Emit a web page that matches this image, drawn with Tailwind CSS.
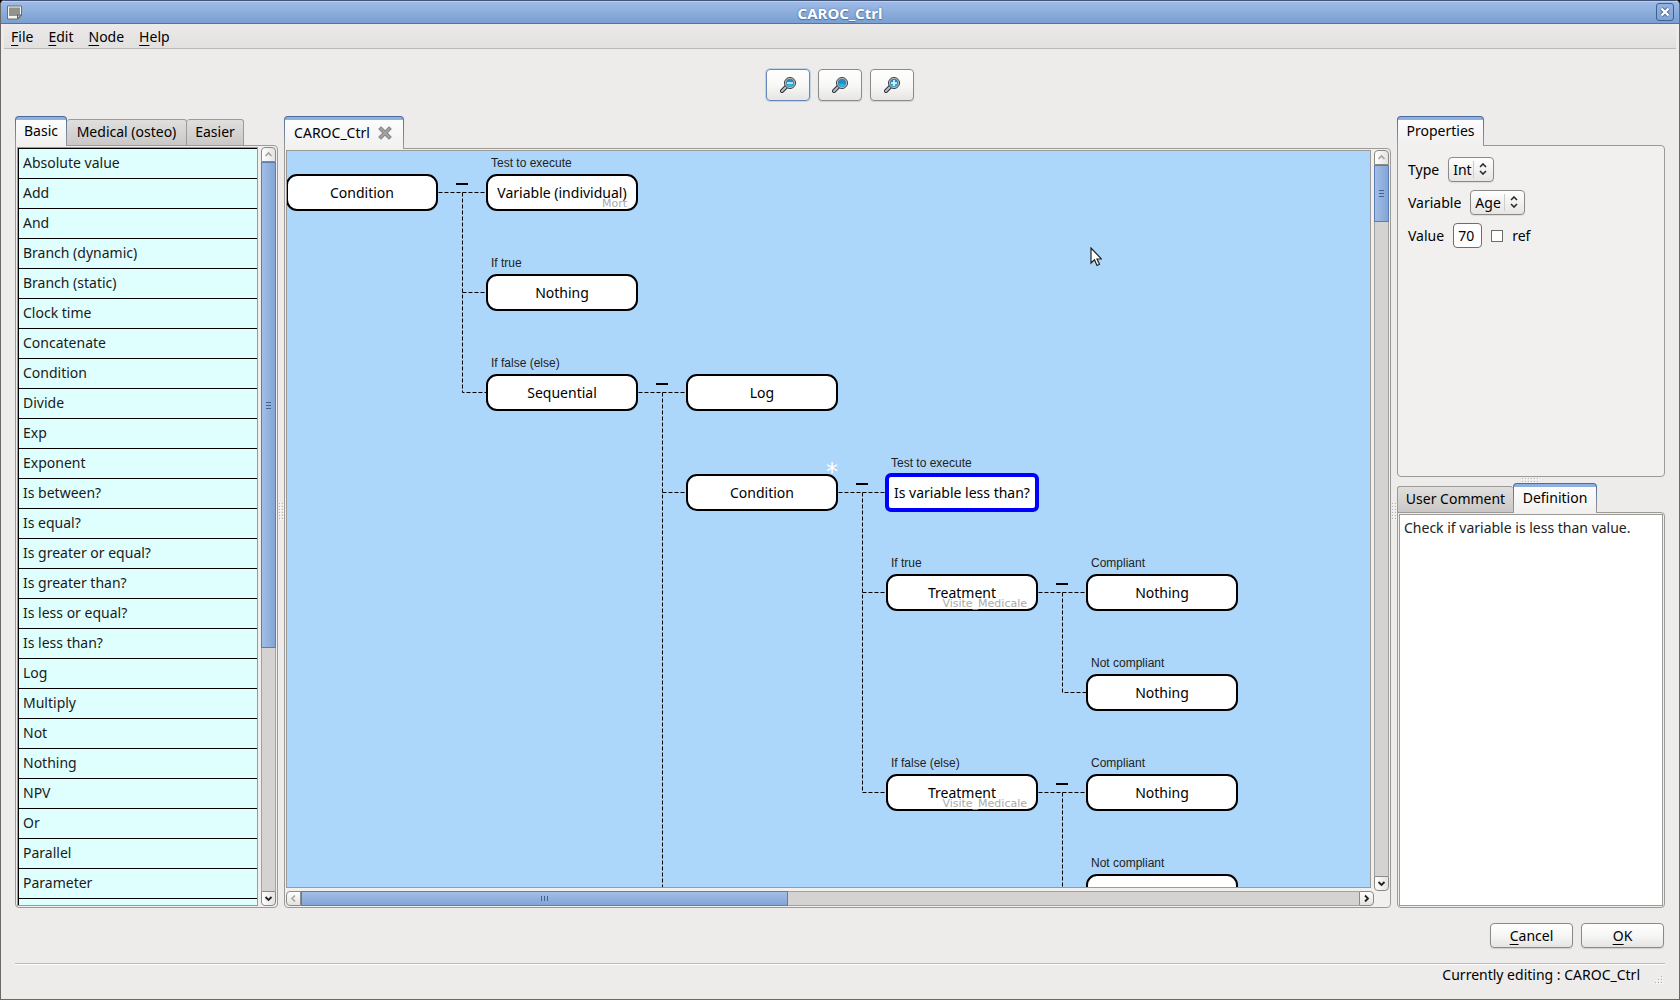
<!DOCTYPE html>
<html lang="en">
<head>
<meta charset="utf-8">
<title>CAROC_Ctrl</title>
<script src="https://cdn.jsdelivr.net/npm/@tailwindcss/browser@4"></script>
</head>
<body class="bg-[#0c0c0c] font-['Noto_Sans',sans-serif] text-[14px] leading-5 text-black">
<svg class="absolute h-0 w-0" aria-hidden="true">
  <defs>
    <linearGradient id="lens" x1="0" y1="0" x2="0" y2="1"><stop offset="0" stop-color="#3f86b8"/><stop offset=".45" stop-color="#1090cf"/><stop offset="1" stop-color="#2fe0f5"/></linearGradient>
    <symbol id="magnifier" viewBox="0 0 16 16">
      <path d="M2 14 L7 9" stroke="#2d3038" stroke-width="4" stroke-linecap="round"/>
      <path d="M2 14 L6.500 9.500" stroke="#b9bfcc" stroke-width="2" stroke-linecap="round"/>
      <circle cx="10" cy="6" r="5.500" fill="#d4d6da" stroke="#33363e" stroke-width="1"/>
      <circle cx="10" cy="6" r="3.900" fill="url(#lens)" stroke="#4d6a84" stroke-width=".6"/>
    </symbol>
    <symbol id="up" viewBox="0 0 13 13"><path d="M3.500 8 L6.500 5 L9.500 8" fill="none" stroke="currentColor" stroke-width="1.600"/></symbol>
    <symbol id="down" viewBox="0 0 13 13"><path d="M3.500 5 L6.500 8 L9.500 5" fill="none" stroke="currentColor" stroke-width="1.800"/></symbol>
    <symbol id="left" viewBox="0 0 13 13"><path d="M8 3.500 L5 6.500 L8 9.500" fill="none" stroke="currentColor" stroke-width="1.600"/></symbol>
    <symbol id="right" viewBox="0 0 13 13"><path d="M5 3.500 L8 6.500 L5 9.500" fill="none" stroke="currentColor" stroke-width="1.800"/></symbol>
    <symbol id="updown" viewBox="0 0 8 12"><path d="M1 4 L4 1 L7 4 M1 8 L4 11 L7 8" fill="none" stroke="#2a2a2a" stroke-width="1.600"/></symbol>
    <pattern id="dots" width="3" height="3" patternUnits="userSpaceOnUse"><rect width="1" height="1" fill="#b4b2af"/><rect x="1" y="1" width="1" height="1" fill="#fff"/></pattern>
  </defs>
</svg>
<div class="flex h-screen flex-col overflow-hidden rounded-t-[5px] border-x border-b border-[#6b6966] bg-[#edeceb]">

  <header class="relative flex h-6 shrink-0 items-center justify-center border-t border-b border-t-[#41547a] border-b-[#4f74a8] bg-linear-to-b from-[#a0bce8] to-[#7a9fd0] shadow-[inset_0_1px_0_#b9cff0]">
    <svg class="absolute left-1.5 top-1 h-4 w-4" viewBox="0 0 16 16"><path d="M.5 1 H14.500 V11 L11 14 H.5 Z" fill="#f4f4f0" stroke="#6d6f6d"/><rect x="2" y="2.500" width="11" height="8.500" fill="#8f958e"/><path d="M10.500 13.500 V10 H14.500 Z" fill="#c9cbc6" stroke="#5c5e5b"/></svg>
    <h1 class="pt-0.5 text-[15px] font-bold text-white [text-shadow:0_1px_1px_#4a6fa5,0_0_2px_#4a6fa5]">CAROC_Ctrl</h1>
    <button aria-label="Close" class="absolute right-[5px] top-0.5 flex h-[18px] w-[18px] items-center justify-center rounded-[3px] border border-[#3f6090] bg-linear-to-b from-[#93b3e0] to-[#7fa3d4]"><svg class="h-2.5 w-2.5" viewBox="0 0 10 10"><path d="M1.500 1.500 L8.500 8.500 M8.500 1.500 L1.500 8.500" stroke="#45679a" stroke-width="4"/><path d="M1.500 1.500 L8.500 8.500 M8.500 1.500 L1.500 8.500" stroke="#fff" stroke-width="2.400"/></svg></button>
  </header>

  <nav class="mx-[3px] flex h-[25px] shrink-0 items-center gap-[15px] border-b border-[#bcbab7] bg-linear-to-b from-[#ebeae9] to-[#e2e1df] px-[7px] pt-0.5">
    <button class="h-5"><u class="underline-offset-3">F</u>ile</button>
    <button class="h-5"><u class="underline-offset-3">E</u>dit</button>
    <button class="h-5"><u class="underline-offset-3">N</u>ode</button>
    <button class="h-5"><u class="underline-offset-3">H</u>elp</button>
  </nav>

  <div class="flex h-[67px] shrink-0 items-start justify-center gap-2 pt-5">
    <button aria-label="Zoom out" class="flex h-8 w-11 items-center justify-center rounded-[4px] border border-[#6788b8] bg-linear-to-b from-white via-[#f8f8f7] to-[#e6e5e4] shadow-[0_0_0_1px_#c3d1e6]"><svg class="h-4 w-4" viewBox="0 0 16 16"><use href="#magnifier"/><path d="M7 6 H13" stroke="#d8f6ff" stroke-width="1.600"/></svg></button>
    <button aria-label="Zoom reset" class="flex h-8 w-11 items-center justify-center rounded-[4px] border border-[#8c8a87] bg-linear-to-b from-white via-[#f8f8f7] to-[#e6e5e4] shadow-[0_1px_1px_#d0cecb]"><svg class="h-4 w-4" viewBox="0 0 16 16"><use href="#magnifier"/></svg></button>
    <button aria-label="Zoom in" class="flex h-8 w-11 items-center justify-center rounded-[4px] border border-[#8c8a87] bg-linear-to-b from-white via-[#f8f8f7] to-[#e6e5e4] shadow-[0_1px_1px_#d0cecb]"><svg class="h-4 w-4" viewBox="0 0 16 16"><use href="#magnifier"/><path d="M7 6 H13 M10 3 V9" stroke="#e8fbff" stroke-width="1.600"/></svg></button>
  </div>

  <main class="flex min-h-0 flex-1 px-3.5">

    <section class="flex w-[263px] shrink-0 flex-col">
      <div class="flex h-[30px] items-end">
        <button class="relative z-10 flex h-[30px] w-[52px] shrink-0 rounded-t-[4px] bg-linear-to-b from-[#4a6c9c] to-[#9c9a97] px-px pt-px"><span class="flex h-full w-full items-center justify-center rounded-t-[3px] border-t-3 border-[#8fb0e0] bg-linear-to-b from-[#fdfdfd] to-[#f1f0ef] pb-1">Basic</span></button>
        <button class="flex h-[27px] w-[120px] shrink-0 items-center justify-center rounded-t-[3px] border border-l-0 border-[#9c9a97] bg-linear-to-b from-[#e0dfdd] to-[#cac8c6] pb-0.5 whitespace-nowrap">Medical (osteo)</button>
        <button class="flex h-[27px] w-[57px] shrink-0 items-center justify-center rounded-t-[3px] border border-l-0 border-[#9c9a97] bg-linear-to-b from-[#e0dfdd] to-[#cac8c6] pb-0.5">Easier</button>
      </div>
      <div class="-mt-px flex min-h-0 flex-1 justify-between rounded-[4px] rounded-tl-none border border-[#9c9a97] bg-[#f1f0ef] p-px">
        <ul class="w-[241px] overflow-hidden border border-[#9c9a97] bg-[#dfffff] text-[#1a1a1a]">
          <li class="h-[30px] border-t border-l border-black pl-1 leading-[27px]">Absolute value</li>
          <li class="h-[30px] border-t border-l border-black pl-1 leading-[27px]">Add</li>
          <li class="h-[30px] border-t border-l border-black pl-1 leading-[27px]">And</li>
          <li class="h-[30px] border-t border-l border-black pl-1 leading-[27px]">Branch (dynamic)</li>
          <li class="h-[30px] border-t border-l border-black pl-1 leading-[27px]">Branch (static)</li>
          <li class="h-[30px] border-t border-l border-black pl-1 leading-[27px]">Clock time</li>
          <li class="h-[30px] border-t border-l border-black pl-1 leading-[27px]">Concatenate</li>
          <li class="h-[30px] border-t border-l border-black pl-1 leading-[27px]">Condition</li>
          <li class="h-[30px] border-t border-l border-black pl-1 leading-[27px]">Divide</li>
          <li class="h-[30px] border-t border-l border-black pl-1 leading-[27px]">Exp</li>
          <li class="h-[30px] border-t border-l border-black pl-1 leading-[27px]">Exponent</li>
          <li class="h-[30px] border-t border-l border-black pl-1 leading-[27px]">Is between?</li>
          <li class="h-[30px] border-t border-l border-black pl-1 leading-[27px]">Is equal?</li>
          <li class="h-[30px] border-t border-l border-black pl-1 leading-[27px]">Is greater or equal?</li>
          <li class="h-[30px] border-t border-l border-black pl-1 leading-[27px]">Is greater than?</li>
          <li class="h-[30px] border-t border-l border-black pl-1 leading-[27px]">Is less or equal?</li>
          <li class="h-[30px] border-t border-l border-black pl-1 leading-[27px]">Is less than?</li>
          <li class="h-[30px] border-t border-l border-black pl-1 leading-[27px]">Log</li>
          <li class="h-[30px] border-t border-l border-black pl-1 leading-[27px]">Multiply</li>
          <li class="h-[30px] border-t border-l border-black pl-1 leading-[27px]">Not</li>
          <li class="h-[30px] border-t border-l border-black pl-1 leading-[27px]">Nothing</li>
          <li class="h-[30px] border-t border-l border-black pl-1 leading-[27px]">NPV</li>
          <li class="h-[30px] border-t border-l border-black pl-1 leading-[27px]">Or</li>
          <li class="h-[30px] border-t border-l border-black pl-1 leading-[27px]">Parallel</li>
          <li class="h-[30px] border-t border-l border-black pl-1 leading-[27px]">Parameter</li>
          <li class="h-[30px] border-t border-l border-black"></li>
        </ul>
        <div class="flex w-[15px] flex-col">
          <button aria-label="Scroll up" class="h-[15px] rounded-t-[4px] border border-[#8c8a87] bg-linear-to-r from-white to-[#e3e2e0] text-[#a5a3a0]"><svg class="h-[13px] w-[13px]"><use href="#up"/></svg></button>
          <div class="min-h-0 flex-1 border-x border-[#a3a19e] bg-[#d4d3d1]"><div class="-mx-px flex h-2/3 items-center justify-center border border-[#5b7eb2] bg-linear-to-r from-[#a3bee7] to-[#82a5d6]"><svg class="h-[7px] w-[5px]" viewBox="0 0 5 7"><path d="M0 0h5v1H0z M0 3h5v1H0z M0 6h5v1H0z" fill="#42638f"/></svg></div></div>
          <button aria-label="Scroll down" class="h-[15px] rounded-b-[4px] border border-[#8c8a87] bg-linear-to-r from-white to-[#e3e2e0] text-[#222]"><svg class="h-[13px] w-[13px]"><use href="#down"/></svg></button>
        </div>
      </div>
    </section>

    <div class="flex w-1.5 shrink-0 items-center justify-center"><svg class="h-[18px] w-[5px]"><rect width="5" height="18" fill="url(#dots)"/></svg></div>

    <section class="flex min-w-0 flex-1 flex-col">
      <div class="flex h-[33px] items-end">
        <button class="relative z-10 flex h-[33px] w-[120px] shrink-0 rounded-t-[4px] bg-linear-to-b from-[#4a6c9c] to-[#9c9a97] px-px pt-px"><span class="flex h-full w-full items-center justify-center gap-2 rounded-t-[3px] border-t-3 border-[#8fb0e0] bg-linear-to-b from-[#fdfdfd] to-[#f1f0ef] pr-0.5 pb-[3px]">CAROC_Ctrl<svg class="h-3.5 w-3.5" viewBox="0 0 14 14"><path d="M3 3 L11 11 M11 3 L3 11" stroke="#868583" stroke-width="4" stroke-linecap="square"/><path d="M3 3 L11 11 M11 3 L3 11" stroke="#a3a2a0" stroke-width="2" stroke-linecap="square"/></svg></span></button>
      </div>
      <div class="-mt-px flex min-h-0 flex-1 gap-[3px] rounded-[4px] rounded-tl-none border border-[#9c9a97] bg-[#f1f0ef] p-px">
        <div class="flex min-w-0 flex-1 flex-col gap-[3px]">
          <div class="relative min-h-0 flex-1 overflow-hidden border border-[#9c9a97] bg-[#acd7fa]">
            <svg class="absolute left-0 top-0 h-full w-full" fill="none" stroke="#000" stroke-dasharray="4 2">
              <g transform="translate(0.5 0.5)">
                <path d="M151 41H199"/><path d="M175 41V241H199"/><path d="M175 141H199"/>
                <path d="M351 241H399"/><path d="M375 241V2000"/><path d="M375 341H399"/>
                <path d="M551 341H599"/><path d="M575 341V641H599"/><path d="M575 441H599"/>
                <path d="M751 441H799"/><path d="M775 441V541H799"/>
                <path d="M751 641H799"/><path d="M775 641V741H799"/>
              </g>
            </svg>
            <i class="absolute left-[169px] top-8 h-0.5 w-3 bg-black"></i>
            <i class="absolute left-[369px] top-[232px] h-0.5 w-3 bg-black"></i>
            <i class="absolute left-[569px] top-[332px] h-0.5 w-3 bg-black"></i>
            <i class="absolute left-[769px] top-[432px] h-0.5 w-3 bg-black"></i>
            <i class="absolute left-[769px] top-[632px] h-0.5 w-3 bg-black"></i>

            <div class="font-['Liberation_Sans',sans-serif] text-[12px] leading-4 text-[#222]">
              <span class="absolute left-[204px] top-1">Test to execute</span>
              <span class="absolute left-[204px] top-[104px]">If true</span>
              <span class="absolute left-[204px] top-[204px]">If false (else)</span>
              <span class="absolute left-[604px] top-[304px]">Test to execute</span>
              <span class="absolute left-[604px] top-[404px]">If true</span>
              <span class="absolute left-[604px] top-[604px]">If false (else)</span>
              <span class="absolute left-[804px] top-[404px]">Compliant</span>
              <span class="absolute left-[804px] top-[504px]">Not compliant</span>
              <span class="absolute left-[804px] top-[604px]">Compliant</span>
              <span class="absolute left-[804px] top-[704px]">Not compliant</span>
            </div>

            <div class="absolute -left-px top-[23px] flex h-[37px] w-[152px] items-center justify-center rounded-[11px] border-2 border-black bg-white">Condition</div>
            <div class="absolute left-[199px] top-[23px] flex h-[37px] w-[152px] items-center justify-center rounded-[11px] border-2 border-black bg-white whitespace-nowrap">Variable (individual)<span class="absolute -bottom-px right-[9px] font-['DejaVu_Sans',sans-serif] text-[11px] leading-3 text-[#aaa]">Mort</span></div>
            <div class="absolute left-[199px] top-[123px] flex h-[37px] w-[152px] items-center justify-center rounded-[11px] border-2 border-black bg-white">Nothing</div>
            <div class="absolute left-[199px] top-[223px] flex h-[37px] w-[152px] items-center justify-center rounded-[11px] border-2 border-black bg-white">Sequential</div>
            <div class="absolute left-[399px] top-[223px] flex h-[37px] w-[152px] items-center justify-center rounded-[11px] border-2 border-black bg-white">Log</div>
            <span class="absolute left-[539px] top-[309px] font-['DejaVu_Sans',sans-serif] text-[24px] leading-6 text-white">*</span>
            <div class="absolute left-[399px] top-[323px] flex h-[37px] w-[152px] items-center justify-center rounded-[11px] border-2 border-black bg-white">Condition</div>
            <div class="absolute left-[598px] top-[322px] flex h-[39px] w-[154px] items-center justify-center rounded-[6px] border-4 border-[#0000ff] bg-white whitespace-nowrap">Is variable less than?</div>
            <div class="absolute left-[599px] top-[423px] flex h-[37px] w-[152px] items-center justify-center rounded-[11px] border-2 border-black bg-white">Treatment<span class="absolute -bottom-px right-[9px] font-['DejaVu_Sans',sans-serif] text-[11px] leading-3 text-[#aaa]">Visite_Medicale</span></div>
            <div class="absolute left-[599px] top-[623px] flex h-[37px] w-[152px] items-center justify-center rounded-[11px] border-2 border-black bg-white">Treatment<span class="absolute -bottom-px right-[9px] font-['DejaVu_Sans',sans-serif] text-[11px] leading-3 text-[#aaa]">Visite_Medicale</span></div>
            <div class="absolute left-[799px] top-[423px] flex h-[37px] w-[152px] items-center justify-center rounded-[11px] border-2 border-black bg-white">Nothing</div>
            <div class="absolute left-[799px] top-[523px] flex h-[37px] w-[152px] items-center justify-center rounded-[11px] border-2 border-black bg-white">Nothing</div>
            <div class="absolute left-[799px] top-[623px] flex h-[37px] w-[152px] items-center justify-center rounded-[11px] border-2 border-black bg-white">Nothing</div>
            <div class="absolute left-[799px] top-[723px] flex h-[37px] w-[152px] items-center justify-center rounded-[11px] border-2 border-black bg-white">Nothing</div>

            <svg class="absolute left-[803px] top-24 h-5 w-3" viewBox="0 0 12 20"><path d="M1 1 V16 L4.500 12.700 L7 18.500 L9.500 17.300 L7 12 H11.500 Z" fill="#fff" stroke="#222" stroke-width="1.200"/></svg>
          </div>
          <div class="-mr-[3px] flex h-[15px] shrink-0">
            <button aria-label="Scroll left" class="w-[15px] shrink-0 rounded-l-[4px] border border-[#8c8a87] bg-linear-to-b from-white to-[#e3e2e0] text-[#a5a3a0]"><svg class="h-[13px] w-[13px]"><use href="#left"/></svg></button>
            <div class="min-w-0 flex-1 border-y border-[#a3a19e] bg-[#d4d3d1]"><div class="-my-px flex h-[15px] w-[46%] items-center justify-center border border-[#5b7eb2] bg-linear-to-b from-[#a3bee7] to-[#82a5d6]"><svg class="h-[5px] w-[7px]" viewBox="0 0 7 5"><path d="M0 0v5h1V0z M3 0v5h1V0z M6 0v5h1V0z" fill="#42638f"/></svg></div></div>
            <button aria-label="Scroll right" class="w-[15px] shrink-0 rounded-r-[4px] border border-[#8c8a87] bg-linear-to-b from-white to-[#e3e2e0] text-[#222]"><svg class="h-[13px] w-[13px]"><use href="#right"/></svg></button>
          </div>
        </div>
        <div class="mb-[15px] flex w-[15px] shrink-0 flex-col">
          <button aria-label="Scroll up" class="h-[15px] rounded-t-[4px] border border-[#8c8a87] bg-linear-to-r from-white to-[#e3e2e0] text-[#a5a3a0]"><svg class="h-[13px] w-[13px]"><use href="#up"/></svg></button>
          <div class="min-h-0 flex-1 border-x border-[#a3a19e] bg-[#d4d3d1]"><div class="-mx-px flex h-[8%] items-center justify-center border border-[#5b7eb2] bg-linear-to-r from-[#a3bee7] to-[#82a5d6]"><svg class="h-[7px] w-[5px]" viewBox="0 0 5 7"><path d="M0 0h5v1H0z M0 3h5v1H0z M0 6h5v1H0z" fill="#42638f"/></svg></div></div>
          <button aria-label="Scroll down" class="h-[15px] rounded-b-[4px] border border-[#8c8a87] bg-linear-to-r from-white to-[#e3e2e0] text-[#222]"><svg class="h-[13px] w-[13px]"><use href="#down"/></svg></button>
        </div>
      </div>
    </section>

    <div class="flex w-1.5 shrink-0 items-center justify-center"><svg class="h-[18px] w-[5px]"><rect width="5" height="18" fill="url(#dots)"/></svg></div>

    <aside class="flex w-[268px] shrink-0 flex-col">
      <div class="flex h-[30px] items-end">
        <button class="relative z-10 flex h-[30px] w-[87px] shrink-0 rounded-t-[4px] bg-linear-to-b from-[#4a6c9c] to-[#9c9a97] px-px pt-px"><span class="flex h-full w-full items-center justify-center rounded-t-[3px] border-t-3 border-[#8fb0e0] bg-linear-to-b from-[#fdfdfd] to-[#f1f0ef] pb-1">Properties</span></button>
      </div>
      <form class="-mt-px flex h-[332px] shrink-0 flex-col items-start gap-2 rounded-[4px] rounded-tl-none border border-[#9c9a97] bg-[#f1f0ef] px-2.5 pt-[11px]">
        <div class="flex items-center gap-[9px]">
          <label for="type">Type</label>
          <div class="relative"><select id="type" class="block h-[25px] w-[46px] appearance-none rounded-[4px] border border-[#8c8a87] bg-linear-to-b from-white to-[#e6e5e4] pl-1 shadow-[0_1px_1px_#dddbd8]"><option>Int</option></select><svg class="pointer-events-none absolute right-[7px] top-1.5 h-3 w-2"><use href="#updown"/></svg><i class="absolute right-5 top-1 h-[17px] w-px bg-[#cfcdca]"></i></div>
        </div>
        <div class="flex items-center gap-[9px]">
          <label for="variable">Variable</label>
          <div class="relative"><select id="variable" class="block h-[25px] w-[55px] appearance-none rounded-[4px] border border-[#8c8a87] bg-linear-to-b from-white to-[#e6e5e4] pl-1 shadow-[0_1px_1px_#dddbd8]"><option>Age</option></select><svg class="pointer-events-none absolute right-[7px] top-1.5 h-3 w-2"><use href="#updown"/></svg><i class="absolute right-5 top-1 h-[17px] w-px bg-[#cfcdca]"></i></div>
        </div>
        <div class="flex items-center gap-[9px]">
          <label for="value">Value</label>
          <input id="value" value="70" class="h-[25px] w-[29px] rounded-[4px] border border-[#6f6d6a] bg-white pl-1">
          <input id="ref" type="checkbox" class="h-3 w-3 appearance-none border border-[#6f6d6a] bg-white">
          <label for="ref">ref</label>
        </div>
      </form>
      <div class="flex h-1.5 shrink-0 items-center justify-center"><svg class="h-[5px] w-[18px]"><rect width="18" height="5" fill="url(#dots)"/></svg></div>
      <div class="flex h-[30px] shrink-0 items-end">
        <button class="flex h-[27px] w-[116px] shrink-0 items-center justify-center rounded-t-[3px] border border-r-0 border-[#9c9a97] bg-linear-to-b from-[#e0dfdd] to-[#cac8c6] pb-0.5 whitespace-nowrap">User Comment</button>
        <button class="relative z-10 flex h-[30px] w-[84px] shrink-0 rounded-t-[4px] bg-linear-to-b from-[#4a6c9c] to-[#9c9a97] px-px pt-px"><span class="flex h-full w-full items-center justify-center rounded-t-[3px] border-t-3 border-[#8fb0e0] bg-linear-to-b from-[#fdfdfd] to-[#f1f0ef] pb-1">Definition</span></button>
      </div>
      <div class="-mt-px flex min-h-0 flex-1 rounded-[4px] rounded-tl-none border border-[#9c9a97] bg-[#f1f0ef] p-px">
        <textarea aria-label="Definition" class="flex-1 resize-none border border-[#9c9a97] bg-white px-1 py-[3px] text-[#222]">Check if variable is less than value.</textarea>
      </div>
    </aside>
  </main>

  <footer class="flex shrink-0 flex-col px-3.5 pt-[15px]">
    <div class="mr-px flex justify-end gap-2">
      <button class="h-[25px] w-[83px] rounded-[4px] border border-[#8c8a87] bg-linear-to-b from-white via-[#f6f6f5] to-[#e6e5e4] shadow-[0_1px_1px_#d0cecb]"><u class="underline-offset-3">C</u>ancel</button>
      <button class="h-[25px] w-[83px] rounded-[4px] border border-[#8c8a87] bg-linear-to-b from-white via-[#f6f6f5] to-[#e6e5e4] shadow-[0_1px_1px_#d0cecb]"><u class="underline-offset-3">O</u>K</button>
    </div>
    <div class="mt-[15px] flex h-9 items-start justify-end gap-3 border-t border-[#bcbab7] pt-px shadow-[inset_0_1px_0_#fff]">
      <span>Currently editing : CAROC_Ctrl</span>
      <svg class="mt-2 mr-px h-3 w-3" viewBox="0 0 12 12"><path d="M12 0 V12 H0 Z" fill="url(#dots)"/></svg>
    </div>
  </footer>
</div>
</body>
</html>
